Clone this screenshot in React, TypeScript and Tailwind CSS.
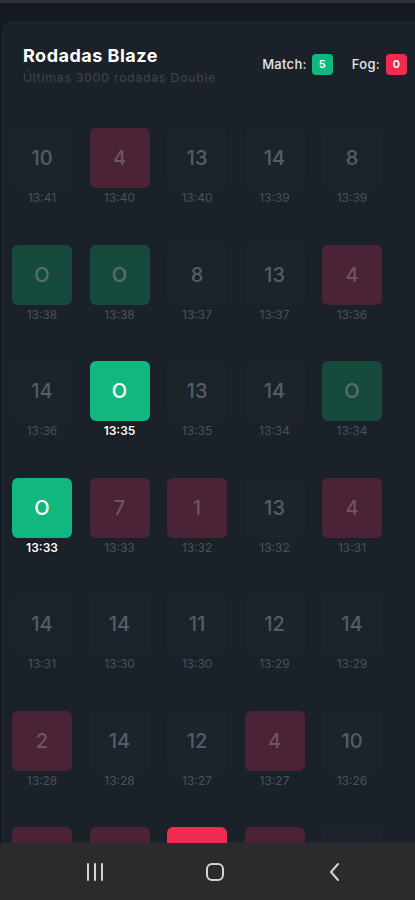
import React from 'react';

type Kind = 'n' | 'r' | 'g' | 'G' | 'R';

interface Spin {
  value: string;
  time: string;
  kind: Kind;
}

const rows: Spin[][] = [
  [
    { value: '10', time: '13:41', kind: 'n' },
    { value: '4', time: '13:40', kind: 'r' },
    { value: '13', time: '13:40', kind: 'n' },
    { value: '14', time: '13:39', kind: 'n' },
    { value: '8', time: '13:39', kind: 'n' },
  ],
  [
    { value: 'O', time: '13:38', kind: 'g' },
    { value: 'O', time: '13:38', kind: 'g' },
    { value: '8', time: '13:37', kind: 'n' },
    { value: '13', time: '13:37', kind: 'n' },
    { value: '4', time: '13:36', kind: 'r' },
  ],
  [
    { value: '14', time: '13:36', kind: 'n' },
    { value: 'O', time: '13:35', kind: 'G' },
    { value: '13', time: '13:35', kind: 'n' },
    { value: '14', time: '13:34', kind: 'n' },
    { value: 'O', time: '13:34', kind: 'g' },
  ],
  [
    { value: 'O', time: '13:33', kind: 'G' },
    { value: '7', time: '13:33', kind: 'r' },
    { value: '1', time: '13:32', kind: 'r' },
    { value: '13', time: '13:32', kind: 'n' },
    { value: '4', time: '13:31', kind: 'r' },
  ],
  [
    { value: '14', time: '13:31', kind: 'n' },
    { value: '14', time: '13:30', kind: 'n' },
    { value: '11', time: '13:30', kind: 'n' },
    { value: '12', time: '13:29', kind: 'n' },
    { value: '14', time: '13:29', kind: 'n' },
  ],
  [
    { value: '2', time: '13:28', kind: 'r' },
    { value: '14', time: '13:28', kind: 'n' },
    { value: '12', time: '13:27', kind: 'n' },
    { value: '4', time: '13:27', kind: 'r' },
    { value: '10', time: '13:26', kind: 'n' },
  ],
  // last row is only partly on screen, behind the nav bar
  [
    { value: '', time: '', kind: 'r' },
    { value: '', time: '', kind: 'r' },
    { value: '', time: '', kind: 'R' },
    { value: '', time: '', kind: 'r' },
    { value: '', time: '', kind: 'n' },
  ],
];

const tileClass: Record<Kind, string> = {
  n: 'bg-[#1d232b] text-[#555c67]',
  r: 'bg-[#4a2336] text-[#6e5560]',
  g: 'bg-[#164a3d] text-[#58706a]',
  G: 'bg-[#10b77f] text-white',
  R: 'bg-[#f02b50] text-white',
};

const SpinTile: React.FC<{ spin: Spin }> = ({ spin }) => {
  const hot = spin.kind === 'G' || spin.kind === 'R';
  return (
    <div className="flex w-[60px] flex-col items-center">
      <div
        className={`flex h-[60px] w-[60px] items-center justify-center rounded-[6px] text-[20px] font-medium ${tileClass[spin.kind]}`}
      >
        {spin.value}
      </div>
      <span
        className={`mt-[2px] h-[16px] text-[12px] leading-[16px] ${
          hot ? 'font-semibold text-white [text-shadow:0_0_2px_#000]' : 'text-[#4a515c]'
        }`}
      >
        {spin.time}
      </span>
    </div>
  );
};

export default function App() {
  return (
    <div className="flex h-[900px] w-[415px] flex-col overflow-hidden bg-[#141a21] font-['Inter',sans-serif]">
      <div className="h-[3px] bg-[#2e3136]" />
      <main className="flex-1 overflow-hidden pl-[2px] pt-[19px]">
        <div className="h-full w-[430px] rounded-tl-[10px] border border-[#242a33] bg-[#1b2129]">
          <header className="flex items-start justify-between pl-[20px] pr-[24px] pt-[21px]">
            <div>
              <h1 className="text-[18px] font-bold leading-[24px] tracking-[0.5px] text-white">Rodadas Blaze</h1>
              <p className="mt-[2px] text-[12px] leading-[16px] tracking-[0.9px] text-[#3f4651]">
                Últimas 3000 rodadas Double
              </p>
            </div>
            <div className="mt-[10px] flex items-center gap-[19px] text-[13px] font-medium tracking-[0.3px] text-[#e5e7eb]">
              <div className="flex items-center gap-[5px]">
                Match:
                <span className="flex h-[21px] w-[21px] items-center justify-center rounded-[4px] bg-[#10b77f] text-[11px] font-semibold text-white">
                  5
                </span>
              </div>
              <div className="flex items-center gap-[6px]">
                Fog:
                <span className="flex h-[21px] w-[21px] items-center justify-center rounded-[4px] bg-[#f02b50] text-[11px] font-semibold text-white">
                  0
                </span>
              </div>
            </div>
          </header>

          <div className="mt-[42px] flex flex-col gap-y-[38.5px] pl-[9px]">
            {rows.map((row, i) => (
              <div key={i} className="flex gap-x-[17.5px]">
                {row.map((spin, j) => (
                  <SpinTile key={j} spin={spin} />
                ))}
              </div>
            ))}
          </div>
        </div>
      </main>

      <nav className="flex h-[57px] shrink-0 items-center gap-[80px] bg-[#2b2b2d] pl-[75px] text-[#d4d4d6]">
        <div className="flex w-[40px] justify-center">
          <svg width="20" height="18" viewBox="0 0 20 18" fill="none" stroke="currentColor" strokeWidth="2" strokeLinecap="round">
            <path d="M3 1v16M10 1v16M17 1v16" />
          </svg>
        </div>
        <div className="flex w-[40px] justify-center">
          <svg width="20" height="20" viewBox="0 0 20 20" fill="none" stroke="currentColor" strokeWidth="2">
            <rect x="2" y="2" width="16" height="16" rx="5" />
          </svg>
        </div>
        <div className="flex w-[40px] justify-center">
          <svg width="14" height="20" viewBox="0 0 14 20" fill="none" stroke="currentColor" strokeWidth="2" strokeLinecap="round" strokeLinejoin="round">
            <path d="M10 2L3 10l7 8" />
          </svg>
        </div>
      </nav>
    </div>
  );
}
